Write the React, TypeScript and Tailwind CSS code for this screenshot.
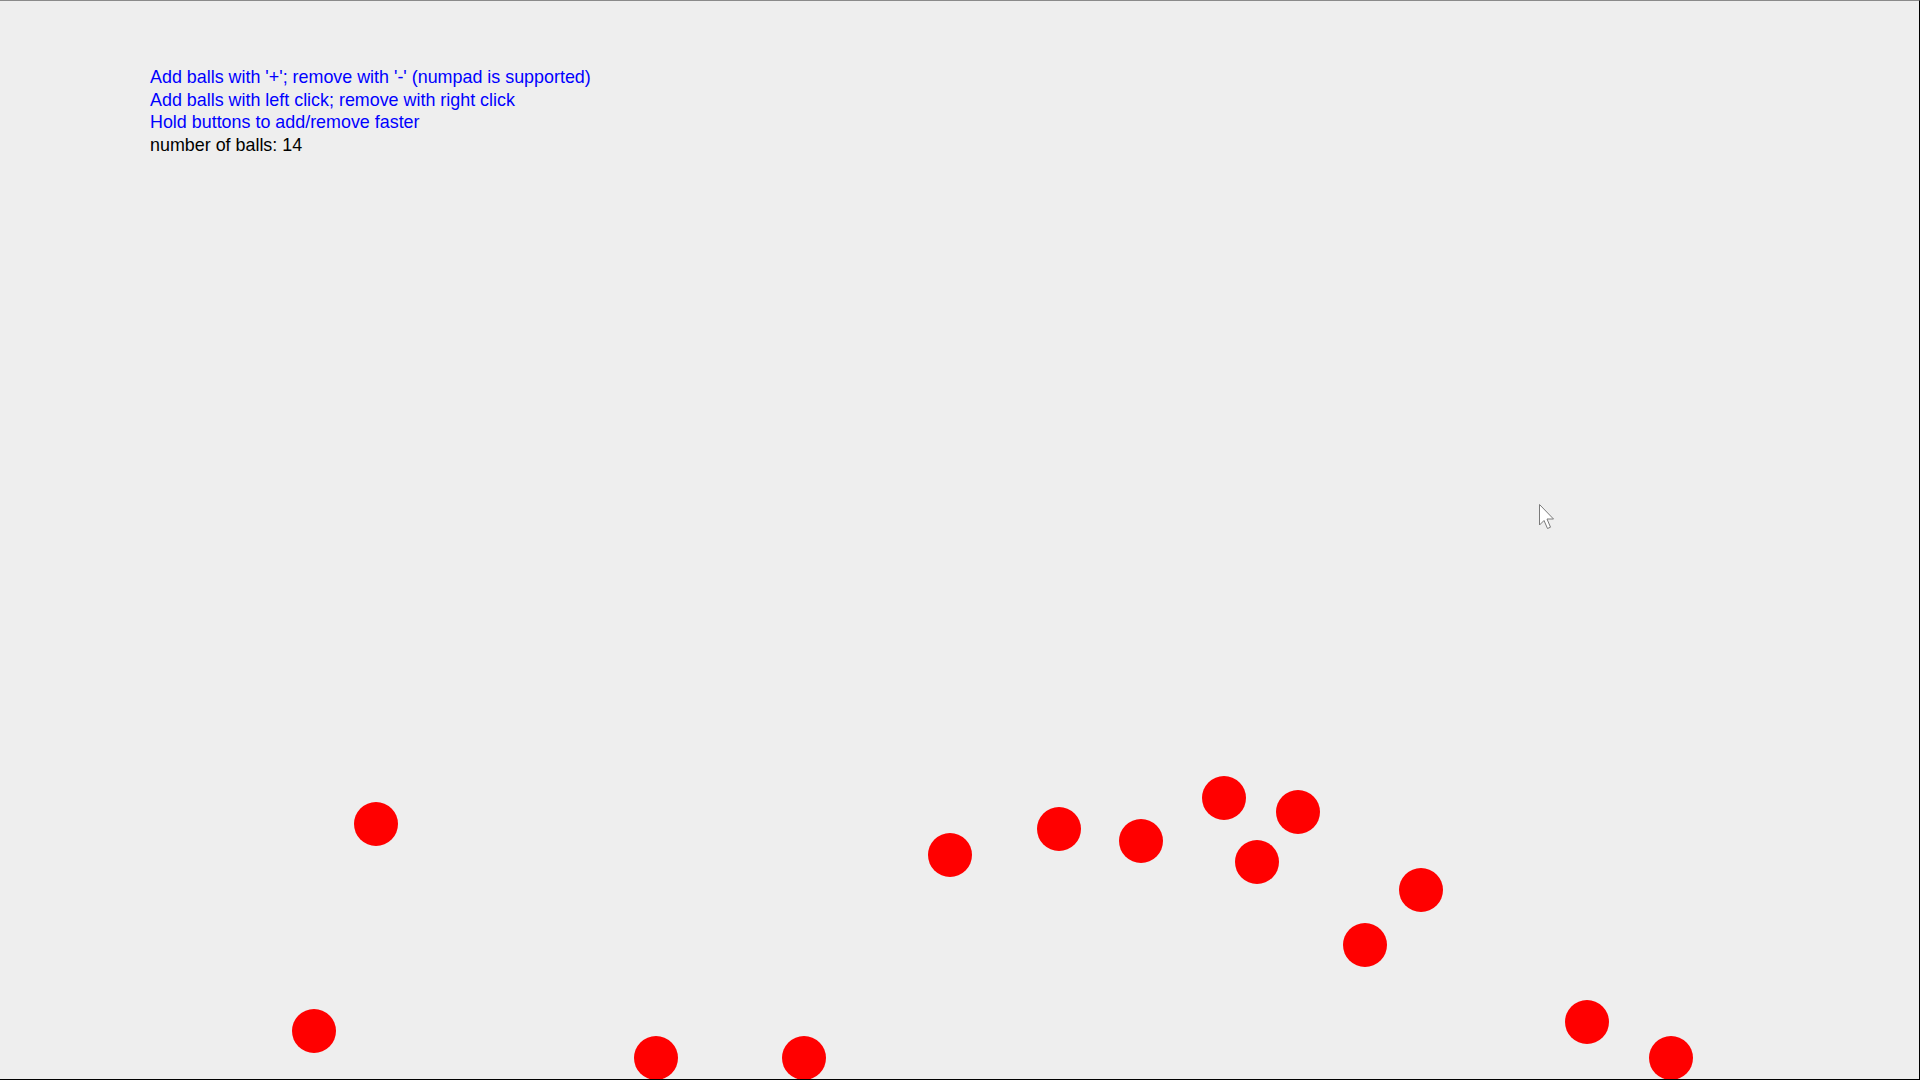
const balls = [
  "left-[354px] top-[801px]",
  "left-[292px] top-[1008px]",
  "left-[634px] top-[1035px]",
  "left-[782px] top-[1035px]",
  "left-[928px] top-[832px]",
  "left-[1037px] top-[806px]",
  "left-[1119px] top-[818px]",
  "left-[1202px] top-[775px]",
  "left-[1276px] top-[789px]",
  "left-[1235px] top-[839px]",
  "left-[1399px] top-[867px]",
  "left-[1343px] top-[922px]",
  "left-[1565px] top-[999px]",
  "left-[1649px] top-[1035px]",
];

function Cursor() {
  return (
    <svg
      className="absolute left-[1538px] top-[502px]"
      width="18"
      height="28"
      viewBox="0 0 18 28"
    >
      <path
        d="M1.5 1.5 V22 L6 17.5 L9.5 25.5 L12.5 24.2 L9 16 H15.5 Z"
        fill="#ffffff"
        stroke="#7a7a7a"
        strokeWidth="1"
        strokeLinejoin="miter"
      />
    </svg>
  );
}

export default function App() {
  return (
    <main className="relative h-[1080px] w-[1920px] overflow-hidden border-t border-r border-b border-t-[#8a8a8a] border-r-black border-b-black bg-[#eeeeee] font-['Liberation_Sans',Arial,sans-serif]">
      {/* Instructions */}
      <div className="pl-[150px] pt-[65px] text-[17.9px] leading-[22.7px]">
        <p className="text-[#0000ff]">
          Add balls with '+'; remove with '-' (numpad is supported)
        </p>
        <p className="text-[#0000ff]">
          Add balls with left click; remove with right click
        </p>
        <p className="text-[#0000ff]">Hold buttons to add/remove faster</p>
        <p className="text-black">number of balls: {balls.length}</p>
      </div>

      {/* Balls */}
      {balls.map((pos, i) => (
        <div
          key={i}
          className={`absolute h-[44px] w-[44px] rounded-full bg-[#ff0000] ${pos}`}
        />
      ))}

      <Cursor />
    </main>
  );
}
